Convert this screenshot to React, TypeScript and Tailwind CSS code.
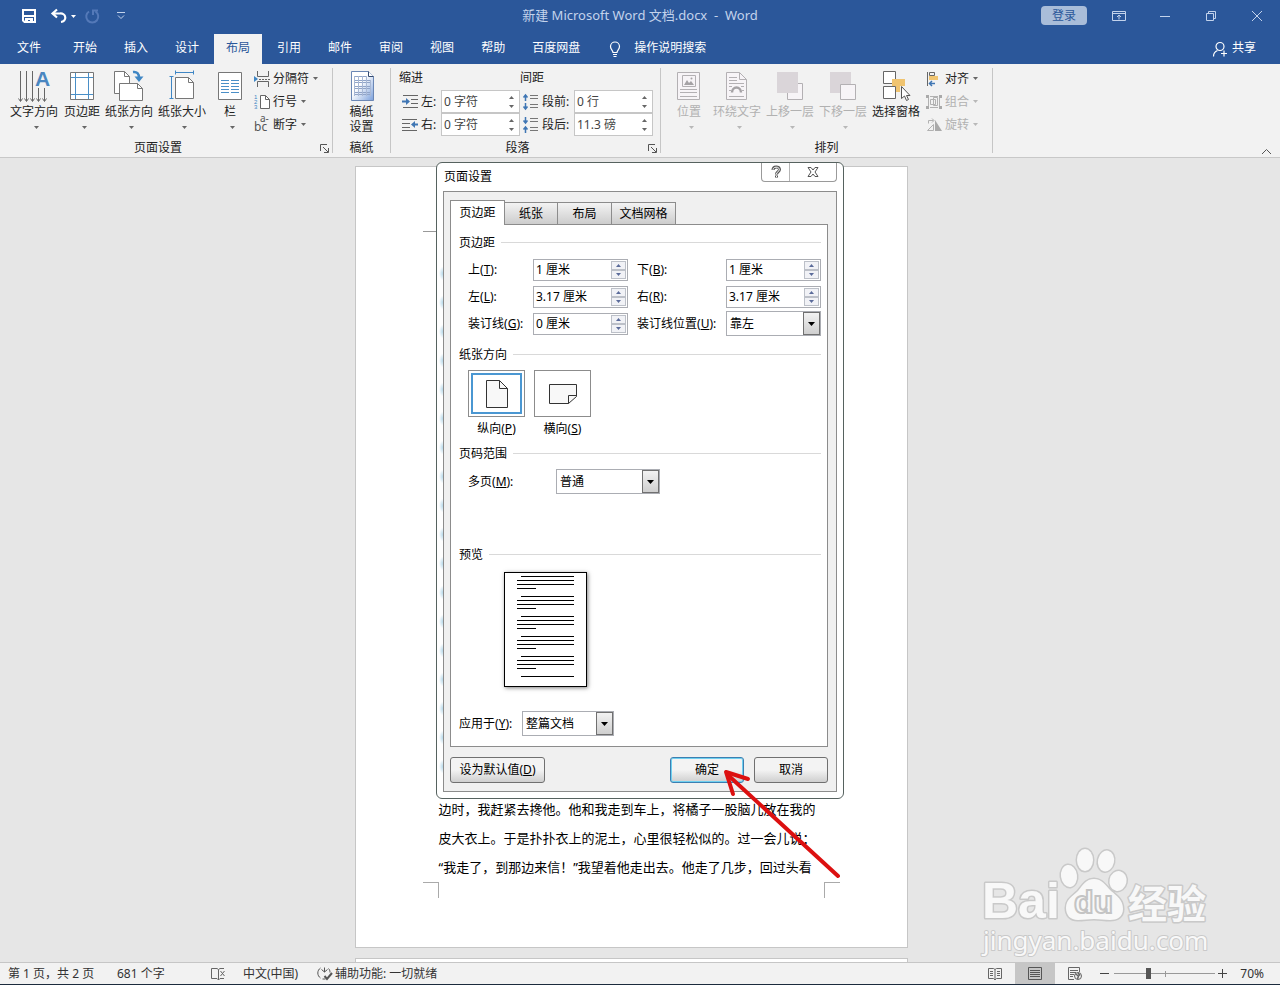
import type { ReactNode } from 'react';

const TABS = ['开始', '插入', '设计', '布局', '引用', '邮件', '审阅', '视图', '帮助', '百度网盘'];

const BODY_LINES = [
  '边时，我赶紧去搀他。他和我走到车上，将橘子一股脑儿放在我的',
  '皮大衣上。于是扑扑衣上的泥土，心里很轻松似的。过一会儿说：',
  '“我走了，到那边来信！”我望着他走出去。他走了几步，回过头看',
];

function Caret({ up = false, className = 'text-[#666]' }: { up?: boolean; className?: string }) {
  return (
    <svg width="5" height="3" viewBox="0 0 5 3" fill="currentColor" className={className} aria-hidden="true">
      <path d={up ? 'M0 3h5L2.5 0z' : 'M0 0h5L2.5 3z'} />
    </svg>
  );
}

function Icon({ size = 32, children }: { size?: number; children: ReactNode }) {
  return (
    <svg width={size} height={size} viewBox={`0 0 ${size} ${size}`} fill="none" className="shrink-0 overflow-visible" aria-hidden="true">
      {children}
    </svg>
  );
}

/* ---------- title bar ---------- */

function TitleBar() {
  return (
    <header className="grid h-[34px] grid-cols-[1fr_auto_1fr] items-start text-[#c3d3ec]">
      <div className="flex h-8 items-center pl-[21px] text-white">
        <button aria-label="保存">
          <Icon size={16}>
            <path d="M2 2h12v12H3.500L2 12.500z" stroke="currentColor" strokeWidth="2" />
            <path d="M2 8h12" stroke="currentColor" strokeWidth="2" />
            <path d="M4 10h8v5H9v-3H7v3H4z" fill="currentColor" />
          </Icon>
        </button>
        <button aria-label="撤消" className="ml-3.5 flex items-center gap-1">
          <Icon size={16}>
            <path d="M6 1.500L1.500 5.500L6 9.500M2 5.500h7a4.500 4 0 0 1 1 8.500" stroke="currentColor" strokeWidth="2.200" />
          </Icon>
          <Caret className="text-white" />
        </button>
        <button aria-label="重复" className="ml-2 text-[#5479b8]">
          <Icon size={16}>
            <path d="M5 3.500A6 6 0 1 0 11.500 3.500M9 7V2.500h5" stroke="currentColor" strokeWidth="2" />
          </Icon>
        </button>
        <button aria-label="自定义快速访问工具栏" className="ml-4 text-[#c3d3ec]">
          <Icon size={10}>
            <path d="M1 1.500h8M2 4.500l3 3 3-3" stroke="currentColor" />
          </Icon>
        </button>
      </div>
      <h1 className="whitespace-pre pt-1.5 text-[13px] leading-[18px]">新建 Microsoft Word 文档.docx  -  Word</h1>
      <div className="flex h-[31px] items-center justify-end">
        <button className="mr-[9px] h-[19px] w-[46px] rounded-sm bg-[#a9bdd9] text-xs leading-[18px] text-[#2b579a]">登录</button>
        <button aria-label="功能区显示选项" className="flex w-[46px] justify-center">
          <Icon size={14}>
            <path d="M.5 2.500h13v9H.5zM.5 4.500h13M7 10.500V6.500M5 8l2-2 2 2" stroke="currentColor" />
          </Icon>
        </button>
        <button aria-label="最小化" className="flex w-[46px] justify-center">
          <Icon size={12}>
            <path d="M1 6.500h10" stroke="currentColor" />
          </Icon>
        </button>
        <button aria-label="还原" className="flex w-[46px] justify-center">
          <Icon size={12}>
            <path d="M1.500 3.500h7v7h-7zM3.500 3.500v-2h7v7h-2" stroke="currentColor" />
          </Icon>
        </button>
        <button aria-label="关闭" className="flex w-[46px] justify-center">
          <Icon size={12}>
            <path d="M1 1l10 10M11 1L1 11" stroke="currentColor" />
          </Icon>
        </button>
      </div>
    </header>
  );
}

function TabBar() {
  return (
    <nav className="flex h-[30px] gap-[3px] text-xs text-white">
      <button className="w-[58px] pb-0.5">文件</button>
      {TABS.map((tab) => (
        <button key={tab} className={tab === '布局' ? 'bg-[#f2f2f2] px-3 pb-0.5 text-[#2b579a]' : 'px-3 pb-0.5'}>
          {tab}
        </button>
      ))}
      <button className="ml-1.5 flex items-center gap-[11px] pl-1.5">
        <Icon size={16}>
          <path d="M6 11.500c0-2-2.500-3-2.500-6a4.500 4.500 0 0 1 9 0c0 3-2.500 4-2.500 6zM6 13.500h4M6.500 15.500h3" stroke="currentColor" strokeWidth="1.200" />
        </Icon>
        <span className="pb-0.5">操作说明搜索</span>
      </button>
      <button className="ml-auto mr-6 flex items-center gap-1">
        <Icon size={16}>
          <circle cx="8" cy="5.500" r="4" stroke="currentColor" strokeWidth="1.200" />
          <path d="M1.500 15.500c0-3 1.500-5 4-6M12 9.500v6M9 12.500h6" stroke="currentColor" strokeWidth="1.200" />
        </Icon>
        <span className="pb-0.5">共享</span>
      </button>
    </nav>
  );
}

/* ---------- ribbon ---------- */

function BigButton({ icon, label, className = 'w-12', disabled = false, menu = true }: {
  icon: ReactNode; label: string; className?: string; disabled?: boolean; menu?: boolean;
}) {
  return (
    <button disabled={disabled} className={`flex shrink-0 flex-col items-center pt-0.5 ${disabled ? 'text-[#b1b1b1]' : ''} ${className}`}>
      <Icon>{icon}</Icon>
      <span className="mt-0.5 whitespace-nowrap leading-4">{label}</span>
      {menu && <span className="mt-1.5 pl-1"><Caret className={disabled ? 'text-[#b8b8b8]' : 'text-[#666]'} /></span>}
    </button>
  );
}

function SmallButton({ icon, label, disabled = false }: { icon: ReactNode; label: string; disabled?: boolean }) {
  return (
    <button disabled={disabled} className={`flex h-[23px] items-center whitespace-nowrap pb-0.5 ${disabled ? 'text-[#b1b1b1]' : ''}`}>
      <Icon size={16}>{icon}</Icon>
      <span className="ml-[3px] mr-1">{label}</span>
      <Caret className={disabled ? 'text-[#b8b8b8]' : 'text-[#666]'} />
    </button>
  );
}

function Launcher({ label }: { label: string }) {
  return (
    <button aria-label={label} className="absolute bottom-0 right-[3px]">
      <Icon size={9}>
        <path d="M.5 7V.5H7M3 3l5 5M8.500 4v4.500H4" stroke="#555" />
      </Icon>
    </button>
  );
}

function Group({ title, className, launcher = false, children }: {
  title: string; className: string; launcher?: boolean; children: ReactNode;
}) {
  return (
    <section className={`relative my-1 flex shrink-0 flex-col border-r border-[#c6c6c6] ${className}`}>
      <div className="flex h-[74px] shrink-0 items-start">{children}</div>
      <h2 className="text-center leading-3">{title}</h2>
      {launcher && <Launcher label={`${title}选项`} />}
    </section>
  );
}

function RibbonSpin({ id, label, value, icon, gap }: { id: string; label: string; value: string; icon: ReactNode; gap: string }) {
  return (
    <div className="flex h-[23px] items-center">
      <Icon size={16}>{icon}</Icon>
      <label htmlFor={id} className={`ml-[3px] whitespace-nowrap ${gap}`}>{label}</label>
      <div className="flex h-[23px] w-[79px] border border-[#c6c6c6] bg-white">
        <input id={id} defaultValue={value} className="w-0 flex-1 pl-0.5 text-[#444] outline-none" />
        <div className="flex w-4 flex-col items-center justify-center gap-1.5">
          <button aria-label={`${label} 增加`}><Caret up /></button>
          <button aria-label={`${label} 减少`}><Caret /></button>
        </div>
      </div>
    </div>
  );
}

function Ribbon() {
  return (
    <div className="relative flex h-[94px] border-b border-[#c8c8c8] bg-[#f2f2f2] text-xs text-[#222]">
      <Group title="页面设置" launcher className="w-[333px] pr-4 [&>div]:pl-2.5">
        <BigButton label="文字方向" icon={
          <>
            <path d="M2.500 1v30M8.500 1v30M14.500 1v30M20.500 18v13M26.500 18v13" stroke="#666" />
            <path d="M.5 28.500l2 3 2-3M6.500 28.500l2 3 2-3M12.500 28.500l2 3 2-3M18.500 28.500l2 3 2-3M24.500 28.500l2 3 2-3" stroke="#666" />
            <text x="17" y="16" fontSize="21" fontWeight="bold" fontFamily="Liberation Sans, sans-serif" fill="#4a86c0">A</text>
          </>
        } />
        <BigButton label="页边距" className="ml-1.5 w-9" icon={
          <>
            <path d="M4.500 2.500h23v27h-23z" fill="#fff" stroke="#777" />
            <path d="M9.500 3v26M22.500 3v26M5 7.500h22M5 24.500h22" stroke="#4a8fc7" />
          </>
        } />
        <BigButton label="纸张方向" className="ml-[5px] w-12" icon={
          <>
            <path d="M1.500 1.500h10l5 5v17h-15z" fill="#fff" stroke="#777" />
            <path d="M11.500 1.500v5h5" stroke="#777" />
            <path d="M6.500 13.500h18l5 5v12h-23z" fill="#fff" stroke="#777" />
            <path d="M24.500 13.500v5h5" stroke="#777" />
            <path d="M20 2c4-.5 6 1.500 6 6" stroke="#3f86c4" strokeWidth="2.500" />
            <path d="M21.500 6.500h9L26 12z" fill="#3f86c4" />
          </>
        } />
        <BigButton label="纸张大小" className="ml-[5px] w-12" icon={
          <>
            <path d="M9.500 7.500h13l5 5v16h-18z" fill="#fff" stroke="#777" />
            <path d="M22.500 7.500v5h5" stroke="#777" />
            <path d="M9.500 2.500h18M9.500.5v4M27.500.5v4M5.500 6.500v22M3.500 6.500h4M3.500 28.500h4" stroke="#3f86c4" />
          </>
        } />
        <BigButton label="栏" className="ml-3 w-6" icon={
          <>
            <path d="M4.500 2.500h23v27h-23z" fill="#fff" stroke="#777" />
            <path d="M7 10.500h8M7 13.500h8M7 16.500h8M7 19.500h8M7 22.500h8M17 10.500h8M17 13.500h8M17 16.500h8M17 19.500h8M17 22.500h8" stroke="#4a8fc7" />
          </>
        } />
        <div className="ml-3 flex flex-col">
          <SmallButton label="分隔符" icon={
            <>
              <path d="M3.500 0v5.500h11V0M3.500 16v-5.500h11V16" stroke="#666" />
              <path d="M5 8.500h11" stroke="#666" strokeDasharray="2 1" />
              <path d="M0 5l4 3-4 3z" fill="#3f86c4" />
            </>
          } />
          <SmallButton label="行号" icon={
            <>
              <path d="M6.500 1.500h5l4 4v9h-9z" fill="#fff" stroke="#666" />
              <path d="M11.500 1.500v4h4" stroke="#666" />
              <text fontSize="6" fontFamily="Liberation Sans, sans-serif" fill="#3f86c4">
                <tspan x="0" y="5">1</tspan><tspan x="0" y="10">2</tspan><tspan x="0" y="15">3</tspan>
              </text>
            </>
          } />
          <SmallButton label="断字" icon={
            <text fontSize="12" fontFamily="Noto Sans, sans-serif" fill="#555">
              <tspan x="0" y="14">bc</tspan><tspan x="6" y="5" fontSize="10">a-</tspan>
            </text>
          } />
        </div>
      </Group>

      <Group title="稿纸" className="w-[58px]">
        <button className="flex w-full flex-col items-center pt-0.5">
          <Icon>
            <defs>
              <linearGradient id="sheet" x1="0" y1="0" x2="1" y2="1">
                <stop offset="0.4" stopColor="#fff" />
                <stop offset="1" stopColor="#7ba0dc" />
              </linearGradient>
            </defs>
            <path d="M5.500 1.500h17l5 5v24h-22z" fill="url(#sheet)" stroke="#6b87b5" />
            <path d="M22.500 1.500v5h5" fill="#fff" stroke="#34496e" />
            <path d="M8 6.500h13M8 10.500h17M8 12.500h17M8 16.500h17M8 18.500h17M8 22.500h17M8 24.500h17" stroke="#90a4c8" />
            <path d="M8.500 6v20M12.500 6v20M16.500 6v20M20.500 6v20M24.500 10v16" stroke="#a9b8d4" />
          </Icon>
          <span className="mt-0.5 w-6 leading-[15px]">稿纸设置</span>
        </button>
      </Group>

      <Group title="段落" launcher className="w-[270px] pr-4 [&>div]:pl-2">
        <div className="w-[121px] shrink-0">
          <h3 className="pb-0.5 leading-5">缩进</h3>
          <div className="pl-[3px]">
            <RibbonSpin id="indent-left" label="左:" value="0 字符" gap="w-5" icon={
              <>
                <path d="M1 1.500h15M9 5.500h7M9 9.500h7M1 13.500h15" stroke="#666" />
                <path d="M0 7.500h5" stroke="#3f76b4" strokeWidth="2" />
                <path d="M4 4l4 3.500L4 11z" fill="#3f76b4" />
              </>
            } />
            <RibbonSpin id="indent-right" label="右:" value="0 字符" gap="w-5" icon={
              <>
                <path d="M0 2.500h15M0 6.500h8M0 10.500h8M0 13.500h15" stroke="#666" />
                <path d="M12 7.500h4" stroke="#3f76b4" strokeWidth="2" />
                <path d="M13 4L9 7.500l4 3.500z" fill="#3f76b4" />
              </>
            } />
          </div>
        </div>
        <div className="shrink-0">
          <h3 className="pb-0.5 leading-5">间距</h3>
          <div className="pl-[3px]">
            <RibbonSpin id="space-before" label="段前:" value="0 行" gap="w-8" icon={
              <>
                <path d="M7 1.500h8M7 4.500h8M7 10.500h8M7 13.500h8" stroke="#777" />
                <path d="M2.500 7V1M.5 3.500l2-2.500 2 2.500M2.500 9v6M.5 12.500l2 2.500 2-2.500" stroke="#3f76b4" strokeWidth="1.500" />
              </>
            } />
            <RibbonSpin id="space-after" label="段后:" value="11.3 磅" gap="w-8" icon={
              <>
                <path d="M7 1.500h8M7 4.500h8M7 10.500h8M7 13.500h8" stroke="#777" />
                <path d="M2.500 0v6M.5 3.500l2 2.500 2-2.500M2.500 16v-6M.5 12.500l2-2.500 2 2.500" stroke="#3f76b4" strokeWidth="1.500" />
              </>
            } />
          </div>
        </div>
      </Group>

      <Group title="排列" className="w-[332px] [&>div]:pl-4">
        <BigButton disabled label="位置" className="w-6" icon={
          <>
            <path d="M4.500 2.500h22v27h-22z" fill="#f7f4f7" stroke="#b3b0b3" />
            <path d="M9.500 5.500h13v11h-13z" stroke="#b3b0b3" />
            <path d="M11 15l3-5 2 3 2-2 3 4z" fill="#a5a2a5" />
            <circle cx="18.500" cy="8.500" r="1" fill="#a5a2a5" />
            <path d="M7 19.500h17M7 22.500h17M7 26.500h17" stroke="#b3b0b3" />
          </>
        } />
        <BigButton disabled label="环绕文字" className="ml-3 w-12" icon={
          <>
            <path d="M5.500 2.500h13l7 7v20h-20z" fill="#f7f4f7" stroke="#b3b0b3" />
            <path d="M18.500 2.500v7h7M8 7.500h8M8 10.500h8M8 13.500h15M8 16.500h3M20 16.500h3M8 20.500h2M21 20.500h2M8 26.500h15" stroke="#b3b0b3" />
            <path d="M11 22.500a4.500 5 0 0 1 9 0" stroke="#a5a2a5" strokeWidth="2.500" />
          </>
        } />
        <BigButton disabled label="上移一层" className="ml-[5px] w-12" icon={
          <>
            <path d="M13.500 13.500h15v16h-15z" fill="#f7f4f7" stroke="#b3b0b3" />
            <path d="M3 2h21v21H3z" fill="#dad5d9" />
          </>
        } />
        <BigButton disabled label="下移一层" className="ml-[5px] w-12" icon={
          <>
            <path d="M3 2h21v21H3z" fill="#dad5d9" />
            <path d="M13.500 14.500h15v15h-15z" fill="#f7f4f7" stroke="#b3b0b3" />
          </>
        } />
        <BigButton label="选择窗格" className="ml-[5px] w-12" menu={false} icon={
          <>
            <path d="M3.500 1.500h12v12h-12zM3.500 16.500h12v12h-12z" fill="#fff" stroke="#666" />
            <path d="M12 9h13v7h-5v6h-4v-6h-4z" fill="#f0c470" />
            <path d="M21.500 16.500v12l3-2.500 2 4.500 2-1-2-4h3.500z" fill="#fff" stroke="#555" />
          </>
        } />
        <div className="ml-1.5 flex flex-col">
          <SmallButton label="对齐" icon={
            <>
              <path d="M1.500 1v14M3.500 1.500h5v3h-5z" stroke="#666" />
              <path d="M3 5h9v4H3z" fill="#f0c470" />
              <path d="M3 12.500h6M6 10l-2.500 2.500L6 15" stroke="#3f76b4" strokeWidth="1.500" />
            </>
          } />
          <SmallButton disabled label="组合" icon={
            <>
              <path d="M2.500 4v8M13.500 4v8M4 2.500h8M4 13.500h8M4.500 5.500h5v5h-5zM7.500 3.500h4v8h-4z" stroke="#b1b1b1" />
              <path d="M0 1h3v3H0zM13 1h3v3h-3zM0 12h3v3H0zM13 12h3v3h-3z" fill="#aaa" />
            </>
          } />
          <SmallButton disabled label="旋转" icon={
            <>
              <path d="M9 3v11h7z" fill="#aaa" />
              <path d="M7.500 7.500v6h-6zM2.500 6.500V3.500h5M6 1.500l2 2-2 2" stroke="#b1b1b1" />
            </>
          } />
        </div>
      </Group>
      <button aria-label="折叠功能区" className="ml-auto mr-2 self-end">
        <Icon size={11}>
          <path d="M1 8l4.500-4.500L10 8" stroke="#555" />
        </Icon>
      </button>
    </div>
  );
}

/* ---------- page setup dialog ---------- */

function Label({ id, text, hotkey, className = '' }: { id: string; text: string; hotkey: string; className?: string }) {
  return (
    <label htmlFor={id} className={`whitespace-nowrap ${className}`}>
      {text}(<u>{hotkey}</u>):
    </label>
  );
}

function Heading({ children, className = '' }: { children: ReactNode; className?: string }) {
  return (
    <h3 className={`flex h-4 items-center gap-1.5 ${className}`}>
      <span className="pt-0.5 leading-4">{children}</span>
      <span className="h-px flex-1 bg-[#d9d9d9]" />
    </h3>
  );
}

function Spin({ id, value }: { id: string; value: string }) {
  const step = 'flex h-[9px] w-[15px] items-center justify-center border border-[#bcc0c8] bg-[#f1f2f6]';
  return (
    <div className="flex h-[22px] items-center border border-[#abadb3] bg-white pr-px">
      <input id={id} defaultValue={value} className="w-0 flex-1 pl-0.5 outline-none" />
      <div className="flex flex-col">
        <button aria-label="增加" className={step}><Caret up className="text-[#5b6b9a]" /></button>
        <button aria-label="减少" className={step}><Caret className="text-[#5b6b9a]" /></button>
      </div>
    </div>
  );
}

function Select({ id, value, className = '' }: { id: string; value: string; className?: string }) {
  return (
    <div className={`relative flex h-[25px] border border-[#abadb3] bg-white ${className}`}>
      <select id={id} className="w-full appearance-none pl-[3px] outline-none">
        <option>{value}</option>
      </select>
      <span className="pointer-events-none absolute inset-y-0 right-0 flex w-[17px] items-center justify-center border border-[#707070] bg-linear-to-b from-[#f2f2f2] to-[#cfcfcf]">
        <svg width="7" height="4" viewBox="0 0 7 4" aria-hidden="true"><path d="M0 0h7L3.500 4z" fill="#000" /></svg>
      </span>
    </div>
  );
}

function Preview() {
  return (
    <svg width="83" height="115" viewBox="0 0 83 115" className="ml-[45px] mt-2.5 shadow-[1px_1px_4px_rgba(0,0,0,0.5)]" role="img" aria-label="预览">
      <rect x="0.5" y="0.5" width="82" height="114" fill="#fff" stroke="#000" />
      {[0, 20, 40, 60, 80].map((y) => (
        <path key={y} d={`M17 ${y + 4.5}H70M13 ${y + 8.5}H70M13 ${y + 12.5}H70M13 ${y + 16.5}H32`} stroke="#000" />
      ))}
      <path d="M17 104.500H70" stroke="#000" />
    </svg>
  );
}

function PageSetupDialog() {
  const tab = 'mb-px h-[22px] border border-b-0 border-l-0 border-[#8c8c8c] bg-linear-to-b from-[#f3f3f3] to-[#cdcdcd]';
  const push = 'h-[26px] rounded-[3px] border border-[#707070] bg-linear-to-b from-[#f3f3f3] from-50% to-[#cfcfcf]';
  return (
    <div role="dialog" aria-label="页面设置" className="absolute left-1/2 top-1 w-[408px] -translate-x-1/2 rounded-md border border-[#56625f] bg-white px-1.5 pb-1.5 text-xs text-black">
      <div className="absolute bottom-4 left-0 top-24 w-1.5 bg-[radial-gradient(ellipse_4px_7px_at_right,#b4d8ea,transparent)] bg-[length:6px_29px]" />
      <div className="flex h-7 justify-between">
        <h2 className="pl-px leading-[27px]">页面设置</h2>
        <div className="flex h-[19px] rounded-b border border-t-0 border-[#9a9a9a]">
          <button aria-label="帮助" className="flex w-7 items-center justify-center border-r border-[#b5b5b5]">
            <Icon size={12}>
              <path d="M3 4c0-4 6.500-4 6.500-.5C9.500 6 6.500 5.500 6.500 8.500M6.500 9.500v2" stroke="#555" strokeWidth="3" />
              <path d="M3 3.800c0-3.500 6.300-3.500 6.300-.3C9.300 6 6.500 5.500 6.500 8M6.500 10v1" stroke="#fff" />
            </Icon>
          </button>
          <button aria-label="关闭" className="flex w-[46px] items-center justify-center">
            <Icon size={12}>
              <path d="M1 1.500h3L6 4l2-2.500h3L8 6l3 4.500H8L6 8l-2 2.500H1L4 6z" fill="#fff" stroke="#555" />
            </Icon>
          </button>
        </div>
      </div>

      <div className="border border-[#8c8c8c] bg-[#f0f0f0] pb-2 pl-1.5 pr-2 pt-2">
        <div role="tablist" className="relative -mb-px flex h-[25px] items-end">
          <button role="tab" aria-selected="true" className="h-[25px] w-[55px] border border-b-0 border-[#8c8c8c] bg-white">页边距</button>
          <button role="tab" className={`w-[53px] ${tab}`}>纸张</button>
          <button role="tab" className={`w-[54px] ${tab}`}>布局</button>
          <button role="tab" className={`w-16 ${tab}`}>文档网格</button>
        </div>

        <div className="border border-[#8c8c8c] bg-white px-2 pb-2.5 pr-1.5 pt-[9px]">
          <Heading>页边距</Heading>
          <div className="mt-1.5 grid auto-rows-[27px] grid-cols-[65px_95px_98px_95px] items-center pl-[9px]">
            <Label id="m-top" text="上" hotkey="T" />
            <Spin id="m-top" value="1 厘米" />
            <Label id="m-bottom" text="下" hotkey="B" className="pl-[9px]" />
            <Spin id="m-bottom" value="1 厘米" />
            <Label id="m-left" text="左" hotkey="L" />
            <Spin id="m-left" value="3.17 厘米" />
            <Label id="m-right" text="右" hotkey="R" className="pl-[9px]" />
            <Spin id="m-right" value="3.17 厘米" />
            <Label id="gutter" text="装订线" hotkey="G" />
            <Spin id="gutter" value="0 厘米" />
            <Label id="gutter-pos" text="装订线位置" hotkey="U" className="pl-[9px]" />
            <Select id="gutter-pos" value="靠左" />
          </div>

          <Heading className="mt-[9px]">纸张方向</Heading>
          <div className="mt-2 flex gap-[9px] pl-[9px]">
            <button aria-pressed="true" className="flex w-[57px] flex-col items-center">
              <span className="h-[47px] w-full border border-[#8c8c8c] p-0.5">
                <span className="flex h-full items-center justify-center border-2 border-[#4a97d2]">
                  <Icon size={30}>
                    <path d="M4.500 1.500h13l8 8v19h-21z" fill="#f8f8f8" stroke="#333" />
                    <path d="M17.500 1.500v8h8" stroke="#333" />
                  </Icon>
                </span>
              </span>
              <span className="mt-1 leading-4">纵向(<u>P</u>)</span>
            </button>
            <button aria-pressed="false" className="flex w-[57px] flex-col items-center">
              <span className="flex h-[47px] w-full items-center justify-center border border-[#8c8c8c]">
                <Icon size={30}>
                  <path d="M1.500 5.500h27v12l-8 7h-19z" fill="#f8f8f8" stroke="#333" />
                  <path d="M20.500 24.500v-8h8" stroke="#333" />
                </Icon>
              </span>
              <span className="mt-1 leading-4">横向(<u>S</u>)</span>
            </button>
          </div>

          <Heading className="mt-2">页码范围</Heading>
          <div className="mt-2 flex items-center pl-[9px]">
            <Label id="multi" text="多页" hotkey="M" className="w-[88px]" />
            <Select id="multi" value="普通" className="w-[104px]" />
          </div>

          <Heading className="mt-[52px]">预览</Heading>
          <Preview />
          <div className="mt-6 flex items-center">
            <Label id="apply" text="应用于" hotkey="Y" className="w-[63px]" />
            <Select id="apply" value="整篇文档" className="w-[92px]" />
          </div>
        </div>

        <div className="mt-2.5 flex">
          <button className={`w-[95px] ${push}`}>设为默认值(<u>D</u>)</button>
          <button className="ml-auto mr-2.5 h-[26px] w-[74px] rounded-[3px] border border-[#3c7fb1] bg-linear-to-b from-[#f3f3f3] from-50% to-[#cfcfcf] shadow-[inset_0_0_0_1px_#6fd0f0]">确定</button>
          <button className={`w-[74px] ${push}`}>取消</button>
        </div>
      </div>

      {/* pointer to the OK button */}
      <svg width="120" height="112" viewBox="0 0 120 112" fill="none" className="pointer-events-none absolute -bottom-[82px] left-[284px]" aria-hidden="true">
        <path d="M8 8L117 108" stroke="#dc1010" strokeWidth="4" strokeLinecap="round" />
        <path d="M12 26L5 4L27 11" stroke="#dc1010" strokeWidth="4" strokeLinecap="round" strokeLinejoin="round" />
      </svg>
    </div>
  );
}

/* ---------- document ---------- */

function Watermark() {
  return (
    <svg width="232" height="112" viewBox="0 0 232 112" className="absolute bottom-1 right-[68px]" role="img" aria-label="Baidu 经验">
      <g fill="#f8f8f8" stroke="#c9c9c9" strokeWidth="3" strokeLinejoin="round" paintOrder="stroke">
        <text x="2" y="72" fontSize="50" fontWeight="bold" fontFamily="Liberation Sans, sans-serif">Bai</text>
        <ellipse cx="89" cy="30" rx="8" ry="11" transform="rotate(-8 89 30)" />
        <ellipse cx="105" cy="14" rx="8" ry="11" />
        <ellipse cx="126" cy="15" rx="8" ry="10.500" transform="rotate(12 126 15)" />
        <ellipse cx="138" cy="35" rx="8.500" ry="10" transform="rotate(12 138 35)" />
        <path d="M114 33c8 0 11 6 17 12 6 5 12 9 12 18 0 8-6 11-13 11-6 0-10-1-16-1s-10 1-16 1c-8 0-12-5-12-12 0-9 7-12 12-17 5-6 8-12 16-12z" />
        <text x="148" y="72" fontSize="39" fontWeight="bold" fontFamily="Noto Sans CJK SC, sans-serif">经验</text>
        <text x="3" y="104" fontSize="26" strokeWidth="2" fontFamily="Noto Sans, sans-serif">jingyan.baidu.com</text>
      </g>
      <text x="94" y="67" fontSize="32" fill="#f8f8f8" stroke="#c4c4c4" strokeWidth="2" fontFamily="Liberation Sans, sans-serif" fontWeight="bold">du</text>
    </svg>
  );
}

function DocumentArea() {
  return (
    <main className="relative flex flex-1 flex-col items-center pr-[18px] pt-2">
      <article className="flex w-[553px] flex-1 flex-col border border-[#c6c6c6] bg-white px-[67px] pb-[49px] pt-16">
        <div className="w-4 border-t border-[#999]" />
        <div className="mt-auto pl-4 text-[13px] leading-[29px] text-black">
          {BODY_LINES.map((line) => (
            <p key={line} className="whitespace-nowrap">{line}</p>
          ))}
        </div>
        <div className="flex justify-between">
          <span className="size-4 border-r border-t border-[#aaa]" />
          <span className="size-4 border-l border-t border-[#aaa]" />
        </div>
      </article>
      <div className="mt-2.5 h-1 w-[553px] border border-b-0 border-[#c6c6c6] bg-white" />
      <PageSetupDialog />
      <Watermark />
    </main>
  );
}

function StatusBar() {
  return (
    <footer className="flex h-[23px] items-center border-b border-t border-b-[#1c2b3d] border-t-[#c6c6c6] bg-[#f2f2f2] pl-2 text-xs text-[#333]">
      <span className="w-[109px] whitespace-nowrap">第 1 页，共 2 页</span>
      <span className="w-[93px]">681 个字</span>
      <button aria-label="校对" className="w-[33px]">
        <Icon size={16}>
          <path d="M8.500 3.500L7 2.500H1.500v10H7l1.500 1.500zM8.500 3.500L10 2.500h4M8.500 14l1.500-1.500h4M10.500 5l4 5M14.500 5l-4 5" stroke="#666" />
        </Icon>
      </button>
      <button className="w-[73px] text-left">中文(中国)</button>
      <button className="flex items-center gap-0.5">
        <Icon size={17}>
          <path d="M4.500 3a6 6 0 0 0 0 10M8.500 2.500v4.500M5.500 4.500L8.500 7l3-2.500M12.500 3.500c1 1 1.500 2 1.500 4M6.500 14h3" stroke="#555" />
          <path d="M8.500 11l2.500 3 5-6" stroke="#555" strokeWidth="2" />
        </Icon>
        辅助功能: 一切就绪
      </button>
      <div className="ml-auto flex h-full items-center">
        <button aria-label="阅读视图" className="flex h-full w-10 items-center justify-center">
          <Icon size={14}>
            <path d="M7 2.500L5.500 1.500H.5v10h5L7 13l1.500-1.500h5v-10h-5zM7 2.500V13M2 4.500h3M2 6.500h3M2 8.500h3M9 4.500h3M9 6.500h3M9 8.500h3" stroke="#666" />
          </Icon>
        </button>
        <button aria-label="页面视图" className="flex h-full w-10 items-center justify-center bg-[#c6c6c6]">
          <Icon size={14}>
            <path d="M.5 .5h13v12H.5zM2 3.500h10M2 5.500h10M2 7.500h10M2 9.500h10" stroke="#555" />
          </Icon>
        </button>
        <button aria-label="Web 版式视图" className="flex h-full w-10 items-center justify-center">
          <Icon size={14}>
            <path d="M6 12.500H.5v-12h11V5M2 3.500h8M2 5.500h6M2 7.500h4M2 9.500h3" stroke="#666" />
            <circle cx="10" cy="9" r="3.500" fill="#eee" stroke="#666" />
            <path d="M7.500 7l3 2-1 3M10 6l2 2.500" stroke="#666" strokeWidth="1.500" />
          </Icon>
        </button>
        <button aria-label="缩小" className="ml-[5px]">
          <Icon size={9}><path d="M0 4.500h9" stroke="#444" /></Icon>
        </button>
        <div className="relative ml-[5px] flex h-4 w-[101px] items-center">
          <span className="absolute left-1/2 h-1.5 w-px bg-[#999]" />
          <input
            type="range"
            aria-label="显示比例"
            min={10}
            max={190}
            defaultValue={70}
            className="relative h-3 w-full appearance-none bg-transparent [&::-webkit-slider-runnable-track]:h-px [&::-webkit-slider-runnable-track]:bg-[#999] [&::-webkit-slider-thumb]:-mt-[5px] [&::-webkit-slider-thumb]:h-[11px] [&::-webkit-slider-thumb]:w-[5px] [&::-webkit-slider-thumb]:appearance-none [&::-webkit-slider-thumb]:bg-[#555]"
          />
        </div>
        <button aria-label="放大" className="ml-[3px]">
          <Icon size={9}><path d="M0 4.500h9M4.500 0v9" stroke="#444" /></Icon>
        </button>
        <button className="ml-[13px] mr-4">70%</button>
      </div>
    </footer>
  );
}

export default function App() {
  return (
    <div className="flex min-h-screen flex-col overflow-hidden bg-[#e6e6e6] font-['Noto_Sans','Noto_Sans_CJK_SC',sans-serif]">
      <div className="bg-[#2b579a]">
        <TitleBar />
        <TabBar />
      </div>
      <Ribbon />
      <DocumentArea />
      <StatusBar />
    </div>
  );
}
